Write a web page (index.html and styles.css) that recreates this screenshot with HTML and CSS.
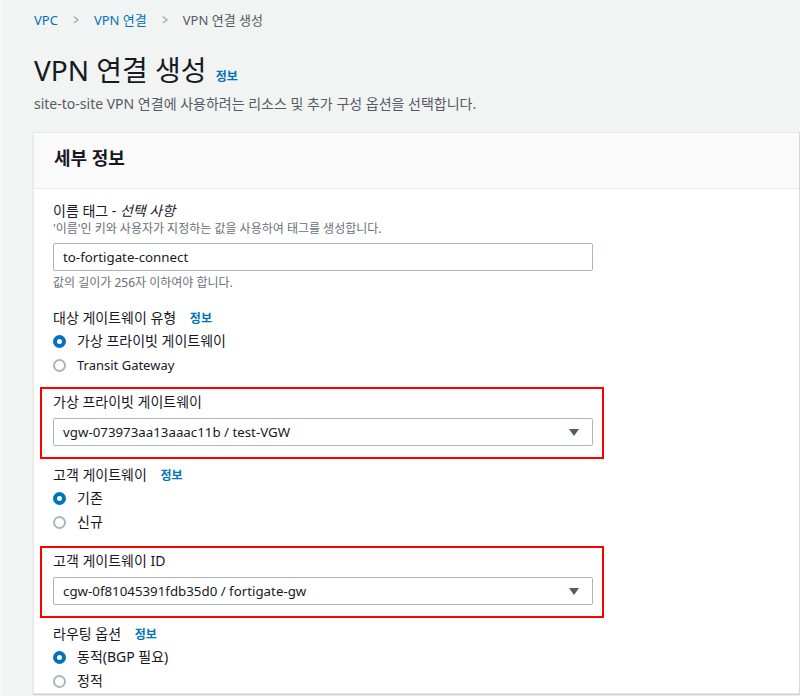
FILE: index.html
```html
<!DOCTYPE html>
<html lang="ko">
	<head>
		<meta charset="UTF-8">
		<title>VPN 연결 생성</title>
		<link rel="stylesheet" href="styles.css">
	</head>
	<body>
		<div class="page">
			<div class="crumbs">
				<a href="#">VPC</a>
				<span class="sep">&gt;</span>
				<a href="#">VPN 연결</a>
				<span class="sep">&gt;</span>
				<span class="cur">VPN 연결 생성</span>
			</div>
			<h1 class="title">VPN 연결 생성 <a class="info" href="#">정보</a></h1>
			<p class="lead">site-to-site VPN 연결에 사용하려는 리소스 및 추가 구성 옵션을 선택합니다.</p>

			<div class="card">
				<div class="card-head">세부 정보</div>
				<div class="card-body">
					<div class="field">
						<div class="label">이름 태그 - <i>선택 사항</i></div>
						<div class="desc">'이름'인 키와 사용자가 지정하는 값을 사용하여 태그를 생성합니다.</div>
						<div class="input">to-fortigate-connect</div>
						<div class="hint">값의 길이가 256자 이하여야 합니다.</div>
					</div>

					<div class="field">
						<div class="label">대상 게이트웨이 유형 <a class="info" href="#">정보</a></div>
						<div class="radio on"><span class="dot"></span>가상 프라이빗 게이트웨이</div>
						<div class="radio"><span class="dot"></span><span class="en">Transit Gateway</span></div>
					</div>

					<div class="mark">
						<div class="label">가상 프라이빗 게이트웨이</div>
						<div class="select">vgw-073973aa13aaac11b / test-VGW<span class="caret"></span></div>
					</div>

					<div class="field tight">
						<div class="label">고객 게이트웨이 <a class="info" href="#">정보</a></div>
						<div class="radio on"><span class="dot"></span>기존</div>
						<div class="radio"><span class="dot"></span>신규</div>
					</div>

					<div class="mark">
						<div class="label">고객 게이트웨이 ID</div>
						<div class="select">cgw-0f81045391fdb35d0 / fortigate-gw<span class="caret"></span></div>
					</div>

					<div class="field tight last">
						<div class="label">라우팅 옵션 <a class="info" href="#">정보</a></div>
						<div class="radio on"><span class="dot"></span>동적(BGP 필요)</div>
						<div class="radio"><span class="dot"></span>정적</div>
					</div>
				</div>
			</div>
		</div>
	</body>
</html>
```

FILE: styles.css
```css
body,div,p,h1{margin:0;padding:0;}
a{text-decoration:none;color:#0073bb;}
body{font:14px/20px "Noto Sans","Noto Sans CJK KR",sans-serif;background:#f2f3f3;color:#16191f;overflow:hidden;}
.page{padding:10px 0 0 32px;border-left:2px solid #f8f8f8;height:686px;}

.crumbs{font-size:13px;line-height:20px;color:#545b64;display:flex;align-items:center;}
.crumbs .sep{color:#879596;margin:0 14px;font-size:14px;transform:scaleX(.7);}

.title{margin-top:22px;font-size:28px;line-height:36px;font-weight:400;color:#16191f;display:flex;align-items:baseline;}
.title .info{font-size:12px;line-height:1;font-weight:700;margin-left:9px;}
.info{font-size:12px;font-weight:700;margin-left:10px;}

.lead{margin-top:6px;font-size:14px;line-height:20px;color:#545b64;}

.card{margin:18px 0 0 -1px;background:#fff;border:1px solid #e4e8e8;border-right-color:#d5dbdb;box-shadow:0 1px 1px rgba(0,28,36,.15);}
.card-head{height:55px;line-height:51px;padding-left:20px;background:#fafafa;border-bottom:1px solid #eaeded;font-size:18px;font-weight:700;}
.card-body{padding:12px 19px 0;width:540px;}

.field{margin-bottom:10px;}
.field + .field{margin-top:17px;}
.field.tight{margin-top:6px;margin-bottom:12px;}
.field.last{margin-bottom:0;}
.label{font-size:14px;line-height:20px;color:#16191f;}
.label i{font-style:italic;}
.desc{font-size:12px;line-height:16px;color:#687078;}
.input,.select{margin-top:6px;height:26px;line-height:26px;border:1px solid #aab7b8;border-radius:2px;padding-left:9px;font-size:13.3px;color:#16191f;background:#fff;position:relative;}
.hint{margin-top:4px;font-size:12px;line-height:16px;color:#687078;}

.radio{height:24px;display:flex;align-items:center;font-size:14px;}
.radio .en{font-size:13px;}
.radio .dot{width:9px;height:9px;border:2px solid #aab7b8;border-radius:50%;margin:0 11px 0 0;box-sizing:content-box;}
.radio.on .dot{width:5px;height:5px;border:4px solid #0073bb;}

.mark{margin:0 -11px 0 -13px;padding:3px 9px 11px 11px;border:2px solid #f00;}
.mark .select{margin-top:6px;}
.caret{position:absolute;right:13px;top:10px;width:0;height:0;border-left:5px solid transparent;border-right:5px solid transparent;border-top:7px solid #545b64;}
```
